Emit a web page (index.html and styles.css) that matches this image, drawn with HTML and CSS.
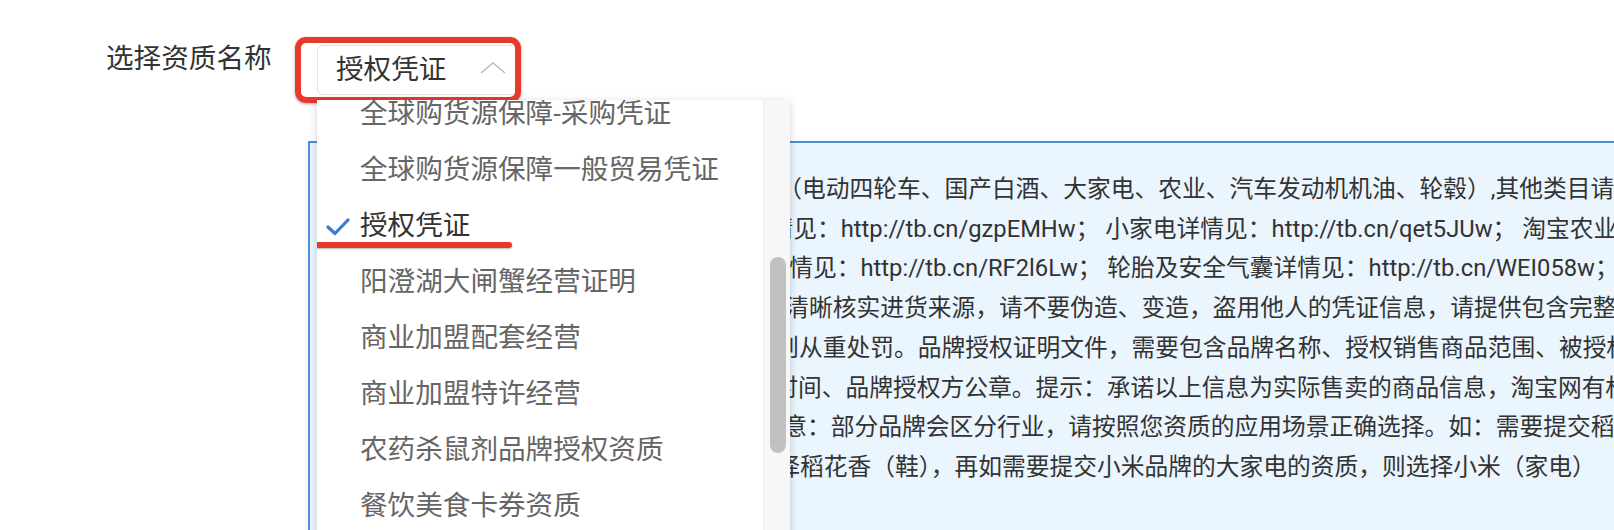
FILE: index.html
```html
<!DOCTYPE html>
<html lang="zh-CN">
<head>
    <meta charset="UTF-8">
    <meta name="viewport" content="width=device-width, initial-scale=1.0">
    <title>选择资质名称</title>
    <link rel="stylesheet" href="styles.css">
</head>
<body>
    <div class="form-row">
        <label class="field-label">选择资质名称</label>

        <div class="select-wrap">
            <div class="select">
                <span class="select-value">授权凭证</span>
                <svg class="select-arrow" width="26" height="12" viewBox="0 0 26 12">
                    <polyline points="1,11 13,1 25,11" fill="none" stroke="#bdbdbd" stroke-width="1.6"/>
                </svg>
            </div>
            <!-- annotation around the select -->
            <div class="mark-box"></div>

            <div class="dropdown">
                <ul class="options">
                    <li class="option">全球购货源保障-采购凭证</li>
                    <li class="option">全球购货源保障一般贸易凭证</li>
                    <li class="option selected">
                        <svg class="check" width="24" height="18" viewBox="0 0 24 18">
                            <polyline points="2,9 9,15.5 22,2" fill="none" stroke="#3a7bd5" stroke-width="3.2" stroke-linecap="round" stroke-linejoin="round"/>
                        </svg>
                        授权凭证
                    </li>
                    <li class="option">阳澄湖大闸蟹经营证明</li>
                    <li class="option">商业加盟配套经营</li>
                    <li class="option">商业加盟特许经营</li>
                    <li class="option">农药杀鼠剂品牌授权资质</li>
                    <li class="option">餐饮美食卡券资质</li>
                    <li class="option">食品经营许可证</li>
                </ul>
                <div class="scrollbar">
                    <div class="scroll-thumb"></div>
                </div>
                <!-- annotation under the selected option -->
                <div class="mark-line"></div>
            </div>
        </div>
    </div>

    <div class="hint-box">
        <div class="hint-line l1">提示：以下特殊类目需要提供授权资质凭证（电动四轮车、国产白酒、大家电、农业、汽车发动机机油、轮毂）,其他类目请参考对应规则</div>
        <div class="hint-line l2">请参考规则执行。电动四轮车与大家电详情见：http://tb.cn/gzpEMHw； 小家电详情见：http://tb.cn/qet5JUw； 淘宝农业详情见</div>
        <div class="hint-line l3">农业详情见相关规则。发动机机油与轮毂详情见：http://tb.cn/RF2l6Lw； 轮胎及安全气囊详情见：http://tb.cn/WEI058w；</div>
        <div class="hint-line l4">提交资质前请您务必对所售商品进行核查并清晰核实进货来源，请不要伪造、变造，盗用他人的凭证信息，请提供包含完整授权链路的证明</div>
        <div class="hint-line l5">链路的证明文件，如发现提交虚假信息的，则从重处罚。品牌授权证明文件，需要包含品牌名称、授权销售商品范围、被授权方名称</div>
        <div class="hint-line l6">被授权方名称、授权渠道、销售区域的起止时间、品牌授权方公章。提示：承诺以上信息为实际售卖的商品信息，淘宝网有权进行核查</div>
        <div class="hint-line l7">淘宝网有权进行核查并追究其法律责任。注意：部分品牌会区分行业，请按照您资质的应用场景正确选择。如：需要提交稻花香品牌</div>
        <div class="hint-line l8">花香品牌的鞋类资质，则需在品牌列表中选择稻花香（鞋），再如需要提交小米品牌的大家电的资质，则选择小米（家电）</div>
    </div>
</body>
</html>
```

FILE: styles.css
```css
body {
    margin: 0;
    background-color: #ffffff;
    font-family: Roboto, "Noto Sans CJK SC", sans-serif;
    color: #333333;
    overflow: hidden;
}

.form-row {
    display: flex;
    align-items: flex-start;
    padding: 45px 0 0 106px;
}

.field-label {
    width: 211px;
    font-size: 27.6px;
    line-height: 28px;
    color: #333333;
}

.select-wrap {
    position: relative;
}

.select {
    display: flex;
    align-items: center;
    justify-content: space-between;
    box-sizing: border-box;
    width: 202px;
    height: 50px;
    padding: 0 12px 0 18px;
    border: 1px solid #e2e2e2;
    border-radius: 6px;
    background-color: #ffffff;
}

.select-value {
    font-size: 27.6px;
    line-height: 50px;
    color: #333333;
}

.select-arrow {
    margin-top: -4px;
}

.mark-box {
    position: absolute;
    left: -22px;
    top: -8px;
    width: 226px;
    height: 66px;
    box-sizing: border-box;
    border: 6px solid #e8392b;
    border-radius: 11px;
    box-shadow: 0 1px 3px rgba(0, 0, 0, 0.35);
    pointer-events: none;
}

.dropdown {
    position: absolute;
    left: 0;
    top: 55px;
    width: 473px;
    height: 460px;
    display: flex;
    background-color: #ffffff;
    box-shadow: 0 2px 8px rgba(0, 0, 0, 0.18);
    overflow: hidden;
    z-index: 2;
}

.options {
    flex: 1;
    list-style: none;
    margin: -14px 0 0 0;
    padding: 0;
}

.option {
    position: relative;
    height: 56px;
    line-height: 56px;
    padding-left: 43px;
    font-size: 27.6px;
    color: #666666;
    white-space: nowrap;
}

.option.selected {
    color: #333333;
}

.check {
    position: absolute;
    left: 9px;
    top: 20px;
}

.scrollbar {
    position: relative;
    width: 26px;
    background-color: #f7f7f7;
    border-left: 1px solid #ececec;
}

.scroll-thumb {
    position: absolute;
    left: 6px;
    top: 157px;
    width: 16px;
    height: 196px;
    border-radius: 8px;
    background-color: #c1c1c1;
}

.mark-line {
    position: absolute;
    left: -6px;
    top: 142px;
    width: 201px;
    height: 6px;
    border-radius: 3px;
    background-color: #e8392b;
    box-shadow: 0 1px 2px rgba(0, 0, 0, 0.3);
}

.hint-box {
    margin: 46px 0 0 308px;
    width: 1500px;
    height: 400px;
    padding: 27px 0 0 12px;
    background-color: #eaf5fe;
    border-top: 2px solid #4a90dc;
    border-left: 2px solid #4a90dc;
}

.hint-line {
    font-size: 23.75px;
    line-height: 39.7px;
    color: #333333;
    white-space: nowrap;
}

.l1 { text-indent: 5px; }
.l2 { text-indent: 20px; }
.l3 { text-indent: 16px; }
.l4 { text-indent: 12px; }
.l5 { text-indent: 2px; }
.l6 { text-indent: 1px; }
.l7 { text-indent: 10px; }
.l8 { text-indent: 3px; }
```
